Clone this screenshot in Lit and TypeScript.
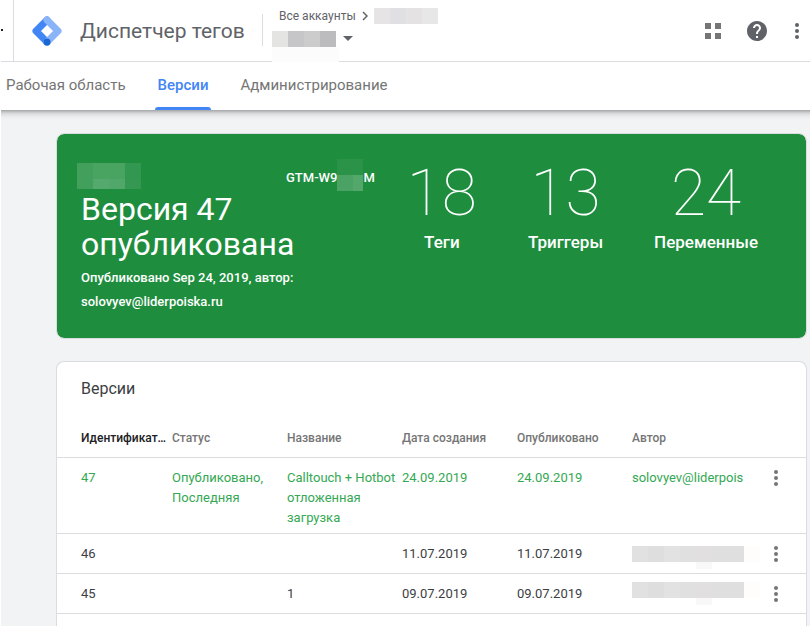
import { LitElement, html, svg, css, nothing } from "lit";
import { customElement, property } from "lit/decorators.js";

type Tile = [x: number, y: number, w: number, h: number, fill: string];

@customElement("redacted-text")
class RedactedText extends LitElement {
  @property({ attribute: false }) tiles: Tile[] = [];

  static styles = css`
    :host { display: inline-block; }
    .mosaic { display: block; }
  `;

  render() {
    const w = Math.max(0, ...this.tiles.map((t) => t[0] + t[2]));
    const h = Math.max(0, ...this.tiles.map((t) => t[1] + t[3]));
    return html`<svg class="mosaic" width=${w} height=${h} viewBox="0 0 ${w} ${h}" shape-rendering="crispEdges" aria-hidden="true">
      ${this.tiles.map((t) => svg`<rect x=${t[0]} y=${t[1]} width=${t[2]} height=${t[3]} fill=${t[4]} />`)}
    </svg>`;
  }
}

@customElement("more-button")
class MoreButton extends LitElement {
  @property() label = "Ещё";

  static styles = css`
    :host { display: inline-flex; color: #757575; }
    .more { display: flex; padding: 0; border: 0; background: none; color: inherit; cursor: pointer; }
  `;

  render() {
    return html`<button class="more" aria-label=${this.label}>
      <svg width="24" height="24" viewBox="0 0 24 24" fill="currentColor">
        <circle cx="12" cy="6" r="2" /><circle cx="12" cy="12" r="2" /><circle cx="12" cy="18" r="2" />
      </svg>
    </button>`;
  }
}

interface Version {
  id: string;
  status?: string;
  name?: string;
  created: string;
  published: string;
  author?: string;
  live?: boolean;
}

const versions: Version[] = [
  { id: "47", status: "Опубликовано, Последняя", name: "Calltouch + Hotbot отложенная загрузка", created: "24.09.2019", published: "24.09.2019", author: "solovyev@liderpois", live: true },
  { id: "46", created: "11.07.2019", published: "11.07.2019" },
  { id: "45", name: "1", created: "09.07.2019", published: "09.07.2019" },
];

const columns = ["Идентификатор", "Статус", "Название", "Дата создания", "Опубликовано", "Автор"];

const counters = [
  { value: 18, label: "Теги" },
  { value: 13, label: "Триггеры" },
  { value: 24, label: "Переменные" },
];

const accountTiles: Tile[] = [
  [0, 0, 16, 16, "#e6e4e5"], [16, 0, 16, 16, "#e0e0e4"], [32, 0, 16, 16, "#e4e2e3"], [48, 0, 16, 16, "#e7e7e7"],
];
const containerTiles: Tile[] = [
  [0, 0, 16, 16, "#e4e4e2"], [16, 0, 16, 16, "#c6c6c9"], [32, 0, 16, 16, "#cccccc"], [48, 0, 16, 16, "#bcbcbf"],
  [0, 16, 67, 15, "#fcfcfc"],
];
const siteTiles: Tile[] = [
  [0, 0, 16, 16, "#429f5c"], [16, 0, 32, 16, "#49a361"], [48, 0, 16, 16, "#329751"],
  [0, 16, 16, 10, "#42a05c"], [16, 16, 16, 10, "#55a96e"], [32, 16, 16, 10, "#50a769"], [48, 16, 16, 10, "#349853"],
];
const idTiles: Tile[] = [
  [0, 0, 26, 16, "#2a9348"], [0, 16, 16, 16, "#4aa264"], [16, 16, 10, 16, "#53a76b"],
];
const authorTiles: Tile[] = [
  [0, 0, 16, 16, "#e1e1e1"], [16, 0, 16, 16, "#dfdede"], [32, 0, 16, 16, "#e2e2e2"], [48, 0, 16, 16, "#e0e0e1"],
  [64, 0, 16, 16, "#e1dfe0"], [80, 0, 32, 16, "#dfdfdf"], [112, 0, 16, 16, "#fefdfc"], [64, 16, 16, 7, "#f8f8f8"],
];

@customElement("app-root")
class AppRoot extends LitElement {
  static styles = css`
    :host {
      display: block;
      min-height: 100vh;
      padding-left: 1px;
      box-sizing: border-box;
      overflow: hidden;
      background: #fff;
      color: #3c4043;
      font: 13px/20px Roboto, "Liberation Sans", sans-serif;
    }
    * { box-sizing: border-box; }
    h1, h2, h3, p { margin: 0; font-weight: 400; }

    .bar { display: flex; height: 62px; border-bottom: 1px solid #dadce0; }
    .back { width: 13px; padding: 29px 0 0; border: 0; border-right: 1px solid #dadce0; background: none; display: flex; }
    .back::before { content: ""; width: 2px; height: 2px; background: #202124; }
    .brand { display: flex; align-items: center; gap: 18px; padding-left: 18px; width: 248px; flex: none; }
    .brand-name { font: 21px/28px Roboto, sans-serif; color: #5f6368; white-space: nowrap; }
    .account { margin-top: 14px; height: 32px; padding-left: 9px; border-left: 1px solid #dadce0; }
    .crumbs { display: flex; align-items: center; gap: 6px; height: 16px; margin-top: -6px; padding-left: 7px; font-size: 12px; line-height: 16px; }
    .crumb { color: #5f6368; text-decoration: none; }
    .picker { display: flex; gap: 4px; margin-top: 7px; padding: 0; border: 0; background: none; }
    .caret { margin-top: 5px; }
    .actions { display: flex; align-items: center; gap: 20px; margin-left: auto; color: #5f6368; }
    .action { display: flex; padding: 0; border: 0; background: none; color: inherit; }
    .actions more-button { color: inherit; margin: 0 1px 0 -4px; }

    .tabs { display: flex; gap: 22px; height: 48px; }
    .tab { position: relative; padding: 13px 5px 0; font: 15px/20px Roboto, sans-serif; color: #757575; text-decoration: none; white-space: nowrap; }
    .tab.current { color: #4285f4; font-weight: 500; }
    .tab.current::after { content: ""; position: absolute; left: 2px; right: 2px; bottom: 0; height: 3px; border-radius: 3px 3px 0 0; background: #4285f4; }

    .page {
      display: flex;
      flex-direction: column;
      gap: 22px;
      min-height: calc(100vh - 110px);
      padding: 23px 3px 0 55px;
      background: linear-gradient(#a3a4a5, #c4c5c6 2px, #dcdedf 4px, #ebedee 7px, #f1f3f4 10px) no-repeat #f1f3f4;
    }
    .card { border: 1px solid #dadce0; border-radius: 8px; background: #fff; }

    .summary { display: flex; min-height: 206px; padding: 24px 48px 24px 20px; background: #1e8e3e; background-clip: padding-box; color: #fff; }
    .release { width: 209px; flex: none; padding-top: 5px; }
    .release redacted-text { display: block; }
    .headline { padding: 3px 0 0 4px; font-size: 32px; line-height: 35px; white-space: pre-line; }
    .meta { padding: 4px 0 0 4px; font-weight: 500; line-height: 24px; white-space: nowrap; }
    .container-id { display: flex; align-items: flex-start; padding-top: 1px; font-weight: 500; }
    .id-part { padding-top: 9px; }
    .counters { display: flex; gap: 51px; margin-left: auto; }
    .counter { display: flex; flex-direction: column; align-items: center; }
    .value { font-size: 64px; font-weight: 100; line-height: 72px; }
    .caption { font-size: 17px; font-weight: 500; line-height: 24px; }

    .list { border-bottom: 0; border-bottom-left-radius: 0; border-bottom-right-radius: 0; flex: 1; }
    .list-title { padding: 17px 24px 18px; font-size: 16px; line-height: 20px; }
    .grid { width: 100%; table-layout: fixed; border-collapse: collapse; }
    .menu-col { width: 59px; }
    .th, .td { padding: 10px 0 5px; height: 40px; border-bottom: 1px solid #dadce0; text-align: left; vertical-align: top; }
    .th { padding-top: 11px; font-size: 12px; font-weight: 500; color: #757575; white-space: nowrap; overflow: hidden; text-overflow: ellipsis; }
    .th:first-child, .td:first-child { padding-left: 24px; }
    .th:first-child { color: #202124; padding-right: 2px; }
    .live { color: #34a853; }
    .author { white-space: nowrap; }
    .author.hidden-name { padding-top: 12px; }
    .row:last-child .author.hidden-name { padding-top: 8px; }
    .author redacted-text { display: block; height: 16px; }
    .menu { padding: 8px 0 0 17px; }
  `;

  private row(v: Version) {
    return html`<tr class="row ${v.live ? "live" : ""}">
      <td class="td">${v.id}</td>
      <td class="td">${v.status ?? nothing}</td>
      <td class="td">${v.name ?? nothing}</td>
      <td class="td">${v.created}</td>
      <td class="td">${v.published}</td>
      <td class="td author ${v.author ? "" : "hidden-name"}">
        ${v.author ?? html`<redacted-text .tiles=${authorTiles}></redacted-text>`}
      </td>
      <td class="td menu"><more-button label="Действия с версией ${v.id}"></more-button></td>
    </tr>`;
  }

  render() {
    return html`
      <header class="bar">
        <button class="back" aria-label="Назад"></button>
        <div class="brand">
          <svg width="30" height="30" viewBox="0 0 30 30" fill="none" stroke-width="7" stroke-linejoin="round" stroke-linecap="round" aria-hidden="true">
            <path d="M15 4 4 15 15 26" stroke="#4285f4" />
            <path d="M15 4 26 15 15 26" stroke="#8ab4f8" />
            <circle cx="15" cy="26" r="3.500" fill="#1967d2" />
          </svg>
          <span class="brand-name">Диспетчер тегов</span>
        </div>
        <div class="account">
          <nav class="crumbs">
            <a class="crumb" href="#accounts">Все аккаунты</a>
            <svg width="6" height="10" viewBox="0 0 6 10" aria-hidden="true"><path d="M1 1l4 4-4 4" fill="none" stroke="#5f6368" stroke-width="1.500" /></svg>
            <redacted-text .tiles=${accountTiles}></redacted-text>
          </nav>
          <button class="picker" aria-label="Выбрать контейнер">
            <redacted-text .tiles=${containerTiles}></redacted-text>
            <svg class="caret" width="10" height="5" viewBox="0 0 10 5"><path d="M0 0h10L5 5z" fill="#5f6368" /></svg>
          </button>
        </div>
        <div class="actions">
          <button class="action" aria-label="Приложения">
            <svg width="24" height="24" viewBox="0 0 24 24" fill="#757575"><path d="M4 4h6v6H4zM14 4h6v6h-6zM4 14h6v6H4zM14 14h6v6h-6z" /></svg>
          </button>
          <button class="action" aria-label="Справка">
            <svg width="24" height="24" viewBox="0 0 24 24" fill="currentColor"><path d="M12 2C6.480 2 2 6.480 2 12s4.480 10 10 10 10-4.480 10-10S17.520 2 12 2zm1 17h-2v-2h2v2zm2.070-7.750l-.9.920C13.450 12.900 13 13.500 13 15h-2v-.5c0-1.100.450-2.100 1.170-2.830l1.240-1.260c.370-.360.590-.860.590-1.410 0-1.100-.9-2-2-2s-2 .9-2 2H8c0-2.210 1.790-4 4-4s4 1.790 4 4c0 .880-.360 1.680-.930 2.250z" /></svg>
          </button>
          <more-button></more-button>
        </div>
      </header>
      <nav class="tabs">
        <a class="tab" href="#workspace">Рабочая область</a>
        <a class="tab current" href="#versions" aria-current="page">Версии</a>
        <a class="tab" href="#admin">Администрирование</a>
      </nav>
      <main class="page">
        <section class="card summary">
          <div class="release">
            <redacted-text .tiles=${siteTiles}></redacted-text>
            <h1 class="headline">${"Версия 47\nопубликована"}</h1>
            <p class="meta">Опубликовано Sep 24, 2019, автор:<br />solovyev@liderpoiska.ru</p>
          </div>
          <div class="container-id"><span class="id-part">GTM-W9</span><redacted-text .tiles=${idTiles}></redacted-text><span class="id-part">M</span></div>
          <div class="counters">
            ${counters.map((c) => html`<div class="counter"><span class="value">${c.value}</span><span class="caption">${c.label}</span></div>`)}
          </div>
        </section>
        <section class="card list">
          <h2 class="list-title">Версии</h2>
          <table class="grid">
            <colgroup>${columns.map(() => html`<col />`)}<col class="menu-col" /></colgroup>
            <thead><tr>${columns.map((c) => html`<th class="th" scope="col">${c}</th>`)}<td class="th"></td></tr></thead>
            <tbody>${versions.map((v) => this.row(v))}</tbody>
          </table>
        </section>
      </main>
    `;
  }
}
